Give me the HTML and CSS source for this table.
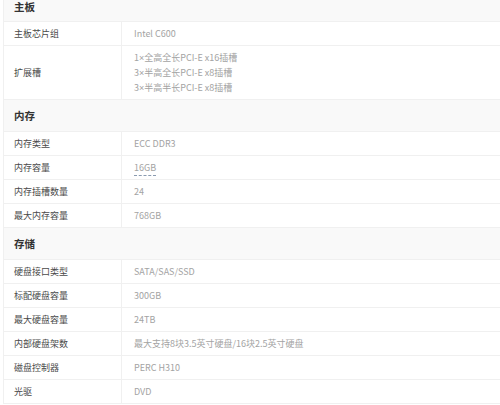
FILE: index.html
```html
<!DOCTYPE html>
<html lang="zh-CN">
<head>
<meta charset="utf-8">
<title>规格参数</title>
<link rel="stylesheet" href="styles.css">
</head>
<body>
<div class="spec">
  <table class="spec-table">
    <tbody>
      <tr class="sec first"><th colspan="2">主板</th></tr>
      <tr><td class="k">主板芯片组</td><td class="v">Intel C600</td></tr>
      <tr><td class="k">扩展槽</td><td class="v"><div class="ln">1<span class="x">×</span>全高全长PCI-E x16插槽</div><div class="ln">3<span class="x">×</span>半高全长PCI-E x8插槽</div><div class="ln">3<span class="x">×</span>半高半长PCI-E x8插槽</div></td></tr>
      <tr class="sec"><th colspan="2">内存</th></tr>
      <tr><td class="k">内存类型</td><td class="v">ECC DDR3</td></tr>
      <tr><td class="k">内存容量</td><td class="v"><span class="link">16GB</span></td></tr>
      <tr><td class="k">内存插槽数量</td><td class="v">24</td></tr>
      <tr><td class="k">最大内存容量</td><td class="v">768GB</td></tr>
      <tr class="sec"><th colspan="2">存储</th></tr>
      <tr><td class="k">硬盘接口类型</td><td class="v">SATA/SAS/SSD</td></tr>
      <tr><td class="k">标配硬盘容量</td><td class="v">300GB</td></tr>
      <tr><td class="k">最大硬盘容量</td><td class="v">24TB</td></tr>
      <tr><td class="k">内部硬盘架数</td><td class="v">最大支持8块3.5英寸硬盘/16块2.5英寸硬盘</td></tr>
      <tr><td class="k">磁盘控制器</td><td class="v">PERC H310</td></tr>
      <tr><td class="k">光驱</td><td class="v">DVD</td></tr>
    </tbody>
  </table>
</div>
</body>
</html>
```
FILE: styles.css
```css
html, body {
  margin: 0;
  padding: 0;
  background: #fff;
  overflow: hidden;
}
body {
  font-family: "Noto Sans CJK SC", "Noto Sans", sans-serif;
}
.spec {
  padding-left: 3px;
  width: 520px;
}
.spec-table {
  width: 100%;
  border-collapse: collapse;
  border-left: 1px solid #f0f0f0;
}
.spec-table td,
.spec-table th {
  padding: 0;
  border-bottom: 1px solid #f0f0f0;
}
.sec th {
  height: 31px;
  background: #f9f9f9;
  text-align: left;
  padding-left: 10px;
  font-size: 10.5px;
  font-weight: bold;
  color: #333;
  line-height: 15px;
}
.sec.first th {
  height: 21px;
  vertical-align: top;
  padding-top: 0;
  line-height: 14px;
}
.k {
  width: 107px;
  padding: 4px 0 4px 10px !important;
  border-right: 1px solid #f0f0f0;
  font-size: 9px;
  color: #4a4a4a;
  line-height: 15px;
  height: 15px;
}
.v {
  padding: 4px 0 4px 12px !important;
  font-size: 9px;
  color: #a3a3a3;
  line-height: 15px;
}
.ln {
  height: 15px;
  overflow: visible;
  white-space: nowrap;
}
.x {
  font-family: "Liberation Sans", sans-serif;
  line-height: 0;
}
.link {
  border-bottom: 1px dashed #8a9bb0;
  padding-bottom: 1px;
}
```
